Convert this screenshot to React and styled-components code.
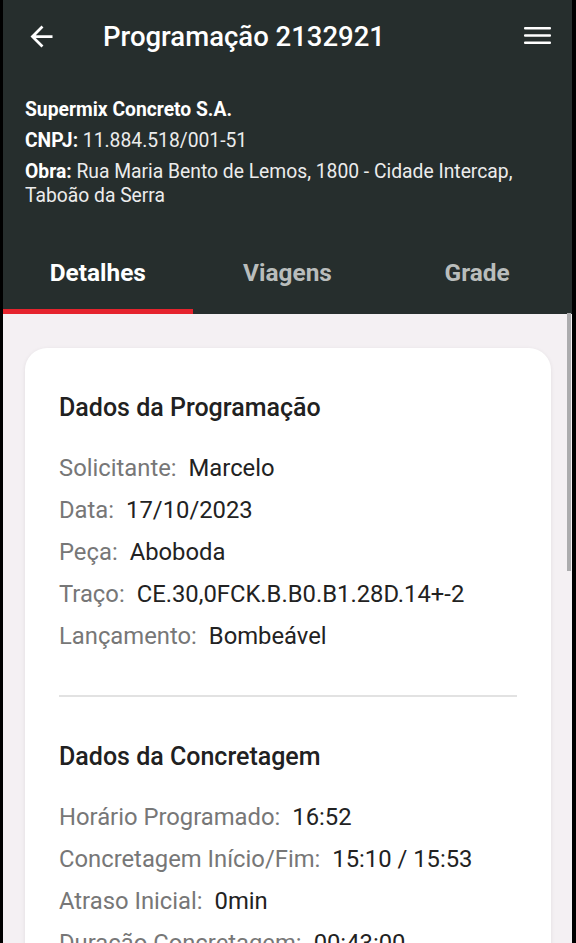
import React from "react";
import styled, { createGlobalStyle } from "styled-components";

const GlobalStyle = createGlobalStyle`
  html, body {
    margin: 0;
    padding: 0;
    background: #000;
    font-family: Roboto, "Noto Sans", Arial, sans-serif;
  }
  * { box-sizing: border-box; }
`;

const programacao = [
  { label: "Solicitante:", value: "Marcelo" },
  { label: "Data:", value: "17/10/2023" },
  { label: "Peça:", value: "Aboboda" },
  { label: "Traço:", value: "CE.30,0FCK.B.B0.B1.28D.14+-2" },
  { label: "Lançamento:", value: "Bombeável" },
];

const concretagem = [
  { label: "Horário Programado:", value: "16:52" },
  { label: "Concretagem Início/Fim:", value: "15:10 / 15:53" },
  { label: "Atraso Inicial:", value: "0min" },
  { label: "Duração Concretagem:", value: "00:43:00" },
];

const App = () => {
  return (
    <>
      <GlobalStyle />
      <Frame>
        <Screen>
          <Header>
            <TopBar>
              <IconButton aria-label="voltar">
                <svg width="33" height="33" viewBox="0 0 24 24">
                  <path
                    fill="#fff"
                    d="M20 11H7.83l5.59-5.59L12 4l-8 8 8 8 1.41-1.41L7.83 13H20v-2z"
                  />
                </svg>
              </IconButton>
              <Title>Programação 2132921</Title>
              <IconButton aria-label="menu">
                <svg width="27" height="18" viewBox="0 0 27 18">
                  <rect x="0" y="0" width="27" height="2.6" rx="1" fill="#fff" />
                  <rect x="0" y="7.2" width="27" height="2.6" rx="1" fill="#fff" />
                  <rect x="0" y="14.4" width="27" height="2.6" rx="1" fill="#fff" />
                </svg>
              </IconButton>
            </TopBar>

            <Info>
              <InfoLine>
                <strong>Supermix Concreto S.A.</strong>
              </InfoLine>
              <InfoLine>
                <strong>CNPJ:</strong> 11.884.518/001-51
              </InfoLine>
              <InfoLine>
                <strong>Obra:</strong> Rua Maria Bento de Lemos, 1800 - Cidade
                Intercap, Taboão da Serra
              </InfoLine>
            </Info>

            <Tabs>
              <Tab active>Detalhes</Tab>
              <Tab>Viagens</Tab>
              <Tab>Grade</Tab>
            </Tabs>
          </Header>

          <Content>
            <Card>
              <Section>
                <SectionTitle>Dados da Programação</SectionTitle>
                {programacao.map((row) => (
                  <Row key={row.label}>
                    <Label>{row.label}</Label>
                    <Value>{row.value}</Value>
                  </Row>
                ))}
              </Section>
              <Divider />
              <Section>
                <SectionTitle>Dados da Concretagem</SectionTitle>
                {concretagem.map((row) => (
                  <Row key={row.label}>
                    <Label>{row.label}</Label>
                    <Value>{row.value}</Value>
                  </Row>
                ))}
              </Section>
            </Card>
          </Content>

          <ScrollThumb />
        </Screen>
      </Frame>
    </>
  );
};

export default App;

export const Frame = styled.div`
  display: flex;
  height: 943px;
  padding: 0 4px 0 3px;
  background: #000;
  overflow: hidden;
`;

export const Screen = styled.div`
  position: relative;
  flex: 1;
  background: #f4f0f3;
  overflow: hidden;
`;

export const Header = styled.header`
  background: #262e2d;
  color: #fff;
`;

export const TopBar = styled.div`
  display: flex;
  align-items: center;
  height: 72px;
  padding: 0 21px 0 22px;
`;

export const IconButton = styled.div`
  display: flex;
  align-items: center;
  justify-content: center;
  line-height: 0;
`;

export const Title = styled.h1`
  flex: 1;
  margin: 0 0 0 45px;
  font-size: 27.5px;
  font-weight: 500;
  color: #fff;
`;

export const Info = styled.div`
  padding: 26px 22px 0 22px;
  display: flex;
  flex-direction: column;
  gap: 7px;
`;

export const InfoLine = styled.p`
  margin: 0;
  font-size: 19.3px;
  line-height: 24px;
  color: #ececec;

  strong {
    font-weight: 700;
    color: #fff;
  }
`;

export const Tabs = styled.nav`
  display: grid;
  grid-template-columns: repeat(3, 1fr);
  margin-top: 31px;
`;

export const Tab = styled.div`
  height: 75px;
  padding-bottom: 3px;
  display: flex;
  align-items: center;
  justify-content: center;
  font-size: 24.4px;
  font-weight: 700;
  color: ${(p) => (p.active ? "#ffffff" : "#b9bdbc")};
  border-bottom: 5px solid ${(p) => (p.active ? "#e5232d" : "transparent")};
`;

export const Content = styled.main`
  padding: 34px 21px 0 22px;
`;

export const Card = styled.section`
  background: #fff;
  border-radius: 22px;
  padding: 0 34px 40px 34px;
  box-shadow: 0 1px 4px rgba(0, 0, 0, 0.08);
`;

export const Section = styled.div`
  padding-top: 45px;
`;

export const SectionTitle = styled.h2`
  margin: 0 0 24px 0;
  font-size: 25px;
  line-height: 30px;
  font-weight: 500;
  color: #212121;
`;

export const Row = styled.div`
  display: flex;
  align-items: baseline;
  height: 42px;
  line-height: 42px;
  font-size: 23.8px;
  white-space: nowrap;
`;

export const Label = styled.span`
  color: #777777;
  margin-right: 12px;
`;

export const Value = styled.span`
  color: #222222;
`;

export const Divider = styled.hr`
  margin: 38px 0 0 0;
  border: none;
  height: 2px;
  background: #e2e2e2;
`;

export const ScrollThumb = styled.div`
  position: absolute;
  right: 1px;
  top: 313px;
  width: 4px;
  height: 258px;
  background: #acacae;
`;
